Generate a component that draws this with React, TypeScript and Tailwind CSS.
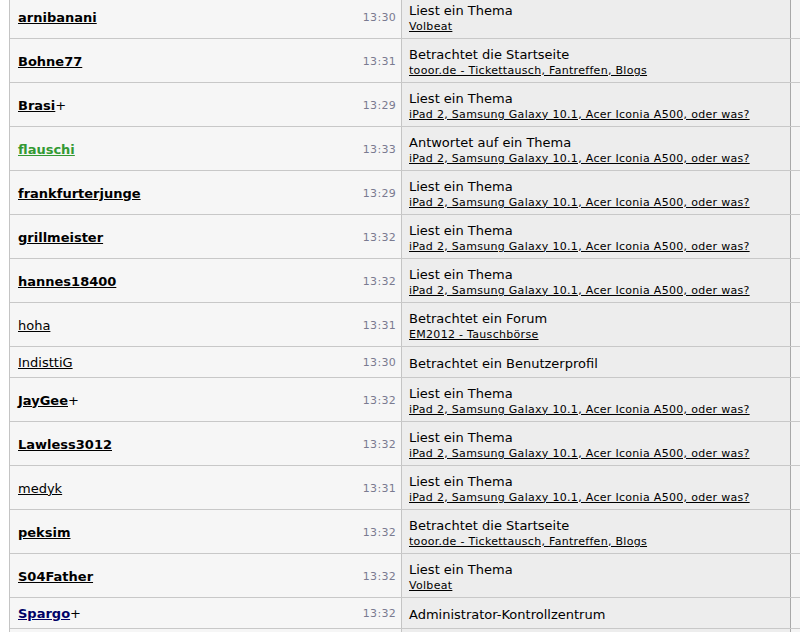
import React from 'react';

type Row = {
  name: string;
  time: string;
  action: string;
  sub?: string;
  style?: 'bold' | 'normal' | 'mod' | 'admin';
  plus?: boolean;
};

const IPAD = 'iPad 2, Samsung Galaxy 10.1, Acer Iconia A500, oder was?';
const TOOOR = 'tooor.de - Tickettausch, Fantreffen, Blogs';

const rows: Row[] = [
  { name: 'arnibanani', time: '13:30', action: 'Liest ein Thema', sub: 'Volbeat', style: 'bold' },
  { name: 'Bohne77', time: '13:31', action: 'Betrachtet die Startseite', sub: TOOOR, style: 'bold' },
  { name: 'Brasi', time: '13:29', action: 'Liest ein Thema', sub: IPAD, style: 'bold', plus: true },
  { name: 'flauschi', time: '13:33', action: 'Antwortet auf ein Thema', sub: IPAD, style: 'mod' },
  { name: 'frankfurterjunge', time: '13:29', action: 'Liest ein Thema', sub: IPAD, style: 'bold' },
  { name: 'grillmeister', time: '13:32', action: 'Liest ein Thema', sub: IPAD, style: 'bold' },
  { name: 'hannes18400', time: '13:32', action: 'Liest ein Thema', sub: IPAD, style: 'bold' },
  { name: 'hoha', time: '13:31', action: 'Betrachtet ein Forum', sub: 'EM2012 - Tauschbörse', style: 'normal' },
  { name: 'IndisttiG', time: '13:30', action: 'Betrachtet ein Benutzerprofil', style: 'normal' },
  { name: 'JayGee', time: '13:32', action: 'Liest ein Thema', sub: IPAD, style: 'bold', plus: true },
  { name: 'Lawless3012', time: '13:32', action: 'Liest ein Thema', sub: IPAD, style: 'bold' },
  { name: 'medyk', time: '13:31', action: 'Liest ein Thema', sub: IPAD, style: 'normal' },
  { name: 'peksim', time: '13:32', action: 'Betrachtet die Startseite', sub: TOOOR, style: 'bold' },
  { name: 'S04Father', time: '13:32', action: 'Liest ein Thema', sub: 'Volbeat', style: 'bold' },
  { name: 'Spargo', time: '13:32', action: 'Administrator-Kontrollzentrum', style: 'admin', plus: true },
];

function nameClass(style: Row['style']) {
  if (style === 'mod') return 'font-bold text-[#339933]';
  if (style === 'admin') return 'font-bold text-[#000066]';
  if (style === 'bold') return 'font-bold text-black';
  return 'font-normal text-black';
}

export default function App() {
  return (
    <div
      className="w-[800px] h-[632px] overflow-hidden bg-white pl-[9px]"
      style={{ fontFamily: '"DejaVu Sans", Verdana, sans-serif' }}
    >
      <div className="-mt-[5px] border-l border-[#c4c4c4]">
        {rows.map((r, i) => (
          <div
            key={i}
            className={`grid grid-cols-[391px_389px_1fr] border-b border-[#c8c8c8] ${r.sub ? 'h-[44px]' : 'h-[31px]'}`}
          >
            {/* name + time */}
            <div className="flex items-center justify-between bg-[#f6f6f6] pt-[2px] pl-[8px] pr-[5px]">
              <span className={`text-[13px] leading-[16px] ${nameClass(r.style)}`}>
                <a className="underline" href="#">{r.name}</a>
                {r.plus && <span className="font-normal text-black">+</span>}
              </span>
              <span className="text-[11px] leading-[14px] tracking-[0.3px] text-[#7a7a90]">{r.time}</span>
            </div>
            {/* location */}
            <div className="flex flex-col justify-center border-l border-[#c4c4c4] bg-[#ededed] pt-[2px] pl-[7px]">
              <div className="text-[13px] leading-[17px] text-black">{r.action}</div>
              {r.sub && (
                <a className="text-[11px] leading-[15px] tracking-[0.3px] text-black underline" href="#">
                  {r.sub}
                </a>
              )}
            </div>
            <div className="border-l border-[#a8a8a8] bg-[#f4f4f4]" />
          </div>
        ))}
        <div className="grid h-[44px] grid-cols-[391px_389px_1fr]">
          <div className="bg-[#f6f6f6]" />
          <div className="border-l border-[#c4c4c4] bg-[#ededed]" />
          <div className="border-l border-[#a8a8a8] bg-[#f4f4f4]" />
        </div>
      </div>
    </div>
  );
}
